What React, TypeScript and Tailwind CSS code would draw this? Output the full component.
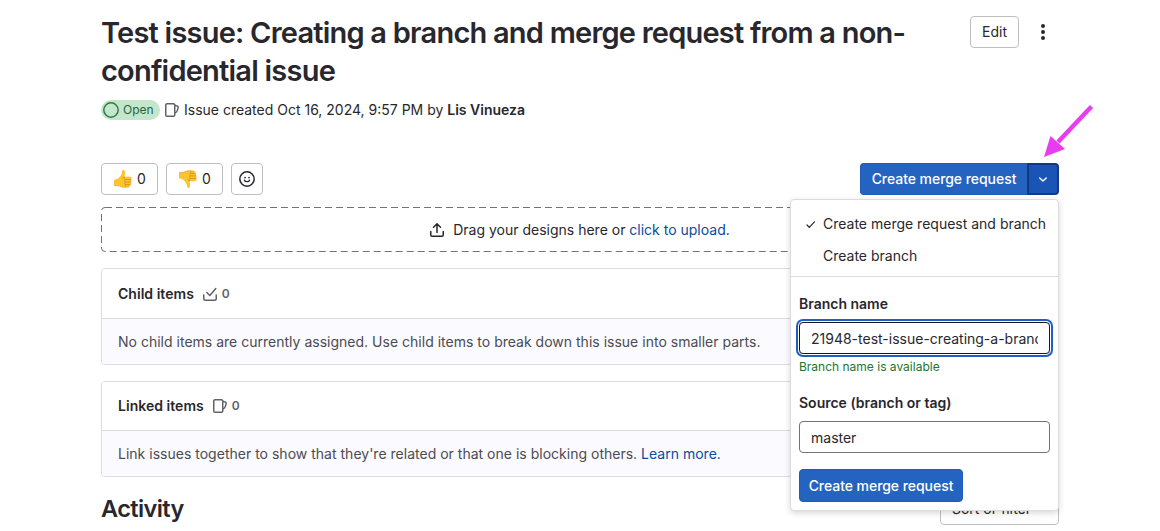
import React from "react";

type IconProps = { className?: string };

function IssueIcon({ className = "" }: IconProps) {
  return (
    <svg className={className} width="16" height="16" viewBox="0 0 16 16" fill="none" stroke="currentColor" strokeWidth="1.5" strokeLinejoin="round">
      <rect x="1.75" y="1.75" width="9" height="12.5" rx="1.3" />
      <path d="M10.75 3.2l2.7.9c.6.2.9.7.7 1.3l-.9 3.2c-.2.7-.9 1.9-2.5 2.4" />
    </svg>
  );
}

function TaskIcon({ className = "" }: IconProps) {
  return (
    <svg className={className} width="16" height="16" viewBox="0 0 16 16" fill="none" stroke="currentColor" strokeWidth="1.5" strokeLinecap="round" strokeLinejoin="round">
      <path d="M1.75 9v3.700c0 .9.7 1.550 1.500 1.550h9.500c.9 0 1.500-.7 1.500-1.550V9" />
      <path d="M4.800 6.500l3 3 6-7" />
    </svg>
  );
}

function UploadIcon() {
  return (
    <svg width="16" height="16" viewBox="0 0 16 16" fill="none" stroke="currentColor" strokeWidth="1.5" strokeLinecap="round" strokeLinejoin="round">
      <path d="M1.75 9.500v3.500c0 .7.5 1.25 1.25 1.25h10c.7 0 1.25-.5 1.25-1.25V9.500" />
      <path d="M8 10.5V1.9M4.5 5.2L8 1.8l3.5 3.4" />
    </svg>
  );
}

function ThumbIcon({ className = "" }: IconProps) {
  return (
    <svg className={className} width="20" height="20" viewBox="0 0 20 20">
      <path d="M1 10.8C4.5 10.5 7.2 8.4 8.6 5L9 2.2C9.3.7 11.2.6 11.8 2.3c.5 1.6.2 3.4-.4 5.4l6 .1c1.4.1 1.8 1.9.6 2.6 1 .6 1 2.1-.1 2.6.8.7.6 2.1-.4 2.5.4 1.2-.3 2.2-1.5 2.4-3.2.6-6.5.6-9-.7-1.5-.8-3-.6-6-.6z" fill="#fcc52f" />
      <path d="M11.4 7.7c-1 .3-1.5 1-1.3 1.9M12.2 10.6h5.8M12.2 13.1h5.7M12.4 15.6h5.1M11.6 8.2c-.5 2 .2 2.2.6 2.4-.9.8-.8 1.8 0 2.5-.6.8-.6 1.8.2 2.5-.3.8-.1 1.5.5 2.2" fill="none" stroke="#d58a16" strokeWidth=".8" />
      <path d="M1 16.5c3-.1 4.6.1 6 .8 2.5 1.2 5.8 1.2 9 .5" fill="none" stroke="#ea9f24" strokeWidth=".7" />
    </svg>
  );
}

function Reaction({ down = false }: { down?: boolean }) {
  return (
    <button className="flex h-8 w-[57px] items-center justify-center gap-1 rounded border border-[#bfbfc3] bg-white">
      <ThumbIcon className={down ? "-scale-y-100" : ""} />
      <span>0</span>
    </button>
  );
}

function Panel({ title, icon, children, className = "" }: { title: string; icon: React.ReactNode; children: React.ReactNode; className?: string }) {
  return (
    <section className={`flex flex-col overflow-hidden rounded border border-[#dcdcde] ${className}`}>
      <header className="flex flex-1 items-center bg-white pl-4">
        <h2 className="font-semibold tracking-[0.03px]">{title}</h2>
        <span className="ml-2 flex items-center gap-1 text-[12px] font-semibold text-[#626168]">{icon}<span>0</span></span>
      </header>
      <div className="flex h-[46px] items-center border-t border-[#dcdcde] bg-[#fafaff] pl-4 text-[#4c4b51]"><p className="tracking-[0.01px]">{children}</p></div>
    </section>
  );
}

function BranchMenu() {
  return (
    <div className="absolute top-[36px] right-0 z-10 h-[312px] w-[269px] rounded border border-[#dcdcde] bg-white shadow-[0_2px_6px_rgba(5,5,6,0.16)]">
      <ul className="flex h-[77px] flex-col border-b border-[#dcdcde] pt-2">
        <li className="flex h-8 items-center pl-[14px]">
          <svg width="12" height="12" viewBox="0 0 12 12" fill="none" stroke="currentColor" strokeWidth="1.2" strokeLinecap="round" strokeLinejoin="round"><path d="M2 7l2.3 2.3L9.500 3.800" /></svg>
          <span className="ml-1.5 whitespace-nowrap">Create merge request and branch</span>
        </li>
        <li className="flex h-8 items-center pl-8">Create branch</li>
      </ul>
      <form className="px-2 pt-[17px]">
        <label className="block font-semibold">Branch name</label>
        <div className="mt-[8px] flex h-8 w-[251px] items-center rounded border border-[#18171d] px-[11px] shadow-[0_0_0_1px_#fff,0_0_0_3px_#1f5fc4]">
          <span className="w-full overflow-hidden pt-px whitespace-nowrap">21948-test-issue-creating-a-branch</span>
        </div>
        <p className="mt-[5px] text-[12px] leading-4 text-[#24752f]">Branch name is available</p>
        <label className="mt-[18px] block font-semibold">Source (branch or tag)</label>
        <div className="mt-2 flex h-8 w-[251px] items-center rounded border border-[#737278] px-[11px] pt-px">master</div>
        <button type="button" className="mt-4 flex h-[33px] w-[164px] items-center justify-center rounded border border-[#1f5bbd] bg-[#2563c0] font-medium tracking-[-0.05px] text-white">Create merge request</button>
      </form>
    </div>
  );
}

export default function App() {
  return (
    <main className="relative h-[531px] overflow-hidden bg-white px-[101px] font-['Inter',sans-serif] text-[14px] leading-5 text-[#28272d]">
      <header className="flex justify-between pt-[13px]">
        <h1 className="w-[830px] pt-px text-[29px] leading-[38px] font-semibold tracking-[-0.78px] whitespace-nowrap">Test issue: Creating a branch and merge request from a non-<br />confidential issue</h1>
        <div className="flex gap-2 pt-[3px]">
          <button className="h-8 w-[49px] rounded border border-[#bfbfc3]">Edit</button>
          <button className="flex h-8 w-8 items-center justify-center" aria-label="More actions">
            <svg width="16" height="16" viewBox="0 0 16 16" fill="currentColor"><circle cx="8" cy="2" r="2" /><circle cx="8" cy="8" r="2" /><circle cx="8" cy="14" r="2" /></svg>
          </button>
        </div>
      </header>
      <div className="mt-2.5 flex h-5 items-center">
        <span className="flex h-5 w-[59px] items-center gap-1 rounded-full bg-[#c3e6cd] pl-[2px] text-[12px] text-[#24663b]">
          <svg width="16" height="16" viewBox="0 0 16 16" fill="none" stroke="#2f7d3f" strokeWidth="1.5"><circle cx="8" cy="8" r="7.2" /></svg>
          Open
        </span>
        <IssueIcon className="ml-1 text-[#626168]" />
        <span className="ml-1">Issue created Oct 16, 2024, 9:57 PM by <b className="font-semibold">Lis Vinueza</b></span>
      </div>
      <div className="relative mt-[43px] flex h-8 justify-between">
        <div className="flex gap-2">
          <Reaction />
          <Reaction down />
          <button className="flex h-8 w-8 items-center justify-center rounded border border-[#bfbfc3]" aria-label="Add reaction">
            <svg width="16" height="16" viewBox="0 0 16 16" fill="none" stroke="currentColor" strokeWidth="1.5" strokeLinecap="round"><circle cx="8" cy="8" r="7.2" /><path d="M5.500 9.200c.6 2 4.400 2 5 0" strokeWidth="1.300" /><path d="M6 6.600h.01M10 6.600h.01" strokeWidth="1.700" /></svg>
          </button>
        </div>
        <div className="flex w-[199px] font-medium text-white">
          <button className="w-[167px] rounded-l border border-r-0 border-[#1f5bbd] bg-[#2563c0] tracking-[-0.05px]">Create merge request</button>
          <button className="flex w-8 items-center justify-center rounded-r border-2 border-[#133a80] bg-[#1a54b4]" aria-label="Choose action">
            <svg width="16" height="16" viewBox="0 0 16 16" fill="none" stroke="currentColor" strokeWidth="1.5" strokeLinecap="round" strokeLinejoin="round"><path d="M4.750 7L8 10l3.250-3" /></svg>
          </button>
        </div>
        <BranchMenu />
        <svg className="absolute -top-[60px] -right-[36px]" width="52" height="56" viewBox="0 0 52 56" fill="#e83cf0"><path d="M48.500 3.500L15 39" stroke="#e83cf0" strokeWidth="4.500" /><path d="M1 54L7.500 33L22 46z" /></svg>
      </div>
      <div className="relative mt-3 flex h-[45px] items-center justify-center gap-2">
        <svg className="absolute inset-0" width="958" height="45" viewBox="0 0 958 45" fill="none"><rect x=".5" y=".5" width="957" height="44" rx="3.5" stroke="#737278" strokeDasharray="7 4" /></svg>
        <UploadIcon />
        <p className="mr-px">Drag your designs here or <a className="text-[#0b4aa2]">click to upload</a>.</p>
      </div>
      <Panel title="Child items" icon={<TaskIcon />} className="mt-4 h-[97px]">No child items are currently assigned. Use child items to break down this issue into smaller parts.</Panel>
      <Panel title="Linked items" icon={<IssueIcon />} className="mt-4 h-24">Link issues together to show that they're related or that one is blocking others. <a className="text-[#0b4aa2]">Learn more.</a></Panel>
      <div className="mt-4 flex items-center justify-between">
        <h2 className="text-[23.5px] leading-[30px] font-semibold tracking-[-0.6px]">Activity</h2>
        <button className="flex h-8 w-[119px] items-center justify-center gap-1 rounded border border-[#bfbfc3] pl-1">Sort or filter
          <svg width="16" height="16" viewBox="0 0 16 16" fill="none" stroke="currentColor" strokeWidth="1.500" strokeLinecap="round"><path d="M4.750 6L8 9l3.250-3" /></svg>
        </button>
      </div>
    </main>
  );
}
